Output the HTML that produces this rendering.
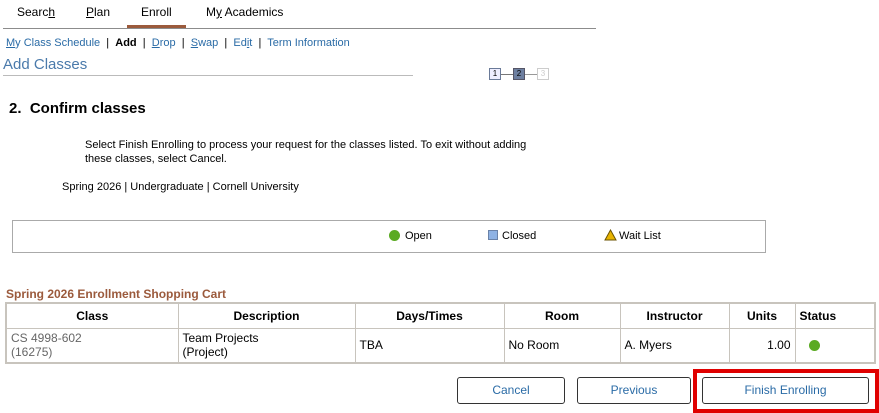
<!DOCTYPE html>
<html><head><style>
*{margin:0;padding:0;box-sizing:border-box}
body{width:879px;height:413px;background:#fff;font-family:"Liberation Sans",Arial,sans-serif;font-size:12px;color:#000;position:relative;overflow:hidden}
.a{position:absolute;white-space:nowrap}
.tab{top:5px;font-size:12px}
.lnk{color:#2a6ba6}
table{position:absolute;left:5px;top:302px;width:871px;border-collapse:collapse;border:2px solid #c8c4bd}
td,th{border:1px solid #c8c4bd;font-size:12px}
th{height:25px;font-weight:bold;text-align:center}
td{height:35px;padding:0 4px;vertical-align:middle}
.btn{position:absolute;top:377px;height:27px;border:1px solid #333;border-radius:3px;color:#2a6ba6;text-align:center;line-height:25px;background:#fff}
</style></head><body>
<div class="a tab" style="left:17px"><span>Searc<u>h</u></span></div>
<div class="a tab" style="left:86px"><u>P</u>lan</div>
<div class="a tab" style="left:141px">Enroll</div>
<div class="a tab" style="left:206px">M<u>y</u> Academics</div>
<div class="a" style="left:127px;top:25px;width:59px;height:3px;background:#9b5a3c"></div>
<div class="a" style="left:3px;top:28px;width:593px;height:1px;background:#8c8c8c"></div>
<div class="a lnk" style="left:6px;top:37px;font-size:11px"><u>M</u>y Class Schedule <span style="color:#000">&nbsp;|&nbsp;</span> <b style="color:#000">Add</b> <span style="color:#000">&nbsp;|&nbsp;</span> <u>D</u>rop <span style="color:#000">&nbsp;|&nbsp;</span> <u>S</u>wap <span style="color:#000">&nbsp;|&nbsp;</span> Ed<u>i</u>t <span style="color:#000">&nbsp;|&nbsp;</span> Term Information</div>
<div class="a" style="left:3px;top:56px;font-size:15px;color:#4a7aab">Add Classes</div>
<div class="a" style="left:3px;top:75px;width:410px;height:1px;background:#bbb"></div>
<div class="a" style="left:489px;top:68px;width:12px;height:12px;border:1px solid #6a7a98;background:#eef;font-size:8px;text-align:center;line-height:10px">1</div>
<div class="a" style="left:501px;top:74px;width:12px;height:1px;background:#777"></div>
<div class="a" style="left:513px;top:68px;width:12px;height:12px;border:1px solid #556;background:#6d7fa0;font-size:8px;text-align:center;line-height:10px">2</div>
<div class="a" style="left:525px;top:74px;width:12px;height:1px;background:#999"></div>
<div class="a" style="left:537px;top:68px;width:12px;height:12px;border:1px solid #ccc;font-size:8px;color:#ccc;text-align:center;line-height:10px">3</div>
<div class="a" style="left:9px;top:100px;font-size:15px;font-weight:bold">2.&nbsp; Confirm classes</div>
<div class="a" style="left:85px;top:138px;line-height:14px;font-size:11px">Select Finish Enrolling to process your request for the classes listed. To exit without adding<br>these classes, select Cancel.</div>
<div class="a" style="left:62px;top:181px;font-size:11px">Spring 2026 | Undergraduate | Cornell University</div>
<div class="a" style="left:12px;top:220px;width:754px;height:33px;border:1px solid #aaa"></div>
<div class="a" style="left:389px;top:230px;width:11px;height:11px;border-radius:50%;background:#5aaa22"></div>
<div class="a" style="left:405px;top:230px;font-size:11px">Open</div>
<div class="a" style="left:488px;top:230px;width:10px;height:10px;background:#8eb2e4;border:1px solid #6a82a8"></div>
<div class="a" style="left:502px;top:230px;font-size:11px">Closed</div>
<svg class="a" style="left:604px;top:229px" width="13" height="12"><path d="M6.5 1L12 11H1Z" fill="#e8b400" stroke="#6a5200"/></svg>
<div class="a" style="left:619px;top:230px;font-size:11px">Wait List</div>
<div class="a" style="left:6px;top:287px;font-weight:bold;color:#9b5a3c">Spring 2026 Enrollment Shopping Cart</div>
<table>
<tr><th style="width:172px">Class</th><th style="width:177px">Description</th><th style="width:149px">Days/Times</th><th style="width:116px">Room</th><th style="width:109px">Instructor</th><th style="width:66px">Units</th><th style="text-align:left;padding-left:4px">Status</th></tr>
<tr><td style="color:#666;line-height:14px">CS 4998-602<br>(16275)</td><td style="line-height:14px">Team Projects<br>(Project)</td><td>TBA</td><td>No Room</td><td>A. Myers</td><td style="text-align:right">1.00</td><td><span style="display:inline-block;width:11px;height:11px;border-radius:50%;background:#5aaa22;margin-left:9px;margin-top:4px"></span></td></tr>
</table>
<div class="btn" style="left:457px;width:108px">Cancel</div>
<div class="btn" style="left:577px;width:114px">Previous</div>
<div class="btn" style="left:702px;width:167px">Finish Enrolling</div>
<div class="a" style="left:693px;top:369px;width:186px;height:44px;border:4px solid #e00000"></div>
</body></html>
